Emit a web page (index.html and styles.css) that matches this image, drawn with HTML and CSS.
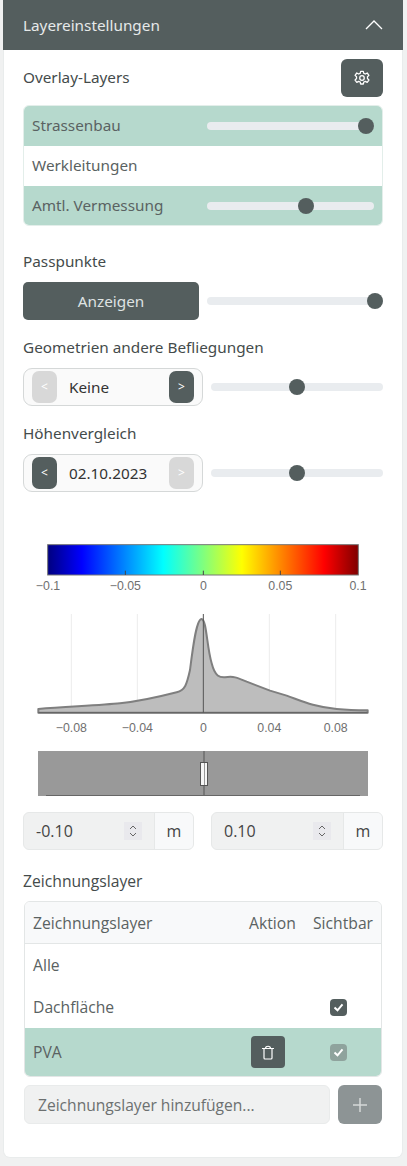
FILE: index.html
```html
<!DOCTYPE html>
<html lang="de">
<head>
<meta charset="utf-8">
<title>Layereinstellungen</title>
<link rel="stylesheet" href="styles.css">
</head>
<body>
<section class="card">
  <header class="card-head">
    <span>Layereinstellungen</span>
    <svg class="chev" width="18" height="10" viewBox="0 0 18 10"><path d="M1 9l8-8 8 8" fill="none" stroke="#fff" stroke-width="1.3"/></svg>
  </header>
  <div class="card-body">
    <div class="overlay-head">
      <span class="label lift">Overlay-Layers</span>
      <button class="gear-btn">
        <svg width="16" height="16" viewBox="0 0 24 24" fill="none" stroke="#fff" stroke-width="1.9" stroke-linejoin="round"><path d="M10 2h4l.7 3 2.4 1 2.7-1.5 2.6 3.5-2.2 2.2v2.6l2.2 2.2-2.6 3.5-2.7-1.5-2.4 1-.7 3h-4l-.7-3-2.4-1-2.7 1.5-2.6-3.5 2.2-2.2v-2.6L1.6 8l2.6-3.5L6.900 6l2.400-1z"/><circle cx="12" cy="12" r="3.400"/></svg>
      </button>
    </div>
    <div class="layer-list">
      <div class="layer-row on"><span class="lift">Strassenbau</span><div class="slider in-row"><i class="thumb" style="left:calc(100% - 8px)"></i></div></div>
      <div class="layer-row"><span class="lift">Werkleitungen</span></div>
      <div class="layer-row on"><span class="lift">Amtl. Vermessung</span><div class="slider in-row"><i class="thumb" style="left:59.5%"></i></div></div>
    </div>

    <div class="label pass-label">Passpunkte</div>
    <div class="ctrl-row">
      <button class="show-btn">Anzeigen</button>
      <div class="slider wide"><i class="thumb" style="left:calc(100% - 8px)"></i></div>
    </div>

    <div class="label next-label">Geometrien andere Befliegungen</div>
    <div class="ctrl-row">
      <div class="stepper">
        <button class="step off">&lt;</button><span class="step-val">Keine</span><button class="step">&gt;</button>
      </div>
      <div class="slider"><i class="thumb" style="left:50%"></i></div>
    </div>

    <div class="label next-label">Höhenvergleich</div>
    <div class="ctrl-row">
      <div class="stepper">
        <button class="step">&lt;</button><span class="step-val">02.10.2023</span><button class="step off">&gt;</button>
      </div>
      <div class="slider"><i class="thumb" style="left:50%"></i></div>
    </div>

    <svg class="plot" width="367" height="210" viewBox="0 0 1101 630">
      <defs>
        <linearGradient id="jet">
          <stop offset="0" stop-color="#00007f"/><stop offset=".11" stop-color="#0000ff"/>
          <stop offset=".372" stop-color="#00ffff"/><stop offset=".5" stop-color="#7fff7f"/>
          <stop offset=".625" stop-color="#ffff00"/><stop offset=".89" stop-color="#ff0000"/>
          <stop offset="1" stop-color="#7f0000"/>
        </linearGradient>
      </defs>
      <rect x="83" y="44" width="932" height="91" fill="url(#jet)" stroke="#777" stroke-width="3"/>
      <path d="M316 122v13M550 122v13M781 122v13" stroke="#444" stroke-width="3"/>
      <g class="tick">
        <text x="84" y="180">−0.1</text><text x="316" y="180">−0.05</text><text x="550" y="180">0</text><text x="781" y="180">0.05</text><text x="1014" y="180">0.1</text>
      </g>
      <path d="M154 252V548M352 252V548M748 252V548M947 252V548" stroke="#ececec" stroke-width="3"/>
      <path d="M55 537C150 530 250 525 300 520S400 505 470 487C495 480 500 465 510 420C520 340 530 267 545 267C560 270 560 350 575 400C585 440 600 443 615 442C640 438 650 442 680 455L750 482L800 497C850 515 880 530 950 537C990 541 1010 541 1043 541V548H55Z" fill="#bdbdbd" stroke="#7f7f7f" stroke-width="6" stroke-linejoin="round"/>
      <path d="M55 548H1043" stroke="#666" stroke-width="4"/>
      <path d="M550 252V548" stroke="#555" stroke-width="3"/>
      <g class="tick">
        <text x="154" y="606">−0.08</text><text x="352" y="606">−0.04</text><text x="550" y="606">0</text><text x="748" y="606">0.04</text><text x="947" y="606">0.08</text>
      </g>
    </svg>

    <div class="range">
      <i class="range-line"></i><i class="range-base"></i><i class="range-handle"></i>
    </div>

    <div class="limits">
      <div class="limit">
        <span class="limit-val">-0.10</span>
        <span class="spin"><svg width="10" height="16" viewBox="0 0 10 16" fill="none" stroke="#666" stroke-width="1"><path d="M2 6l3-3 3 3M2 10l3 3 3-3"/></svg></span>
        <span class="unit">m</span>
      </div>
      <div class="limit">
        <span class="limit-val">0.10</span>
        <span class="spin"><svg width="10" height="16" viewBox="0 0 10 16" fill="none" stroke="#666" stroke-width="1"><path d="M2 6l3-3 3 3M2 10l3 3 3-3"/></svg></span>
        <span class="unit">m</span>
      </div>
    </div>

    <div class="label draw-label">Zeichnungslayer</div>
    <div class="draw-table">
      <div class="tr th"><span class="c-name">Zeichnungslayer</span><span class="c-act">Aktion</span><span class="c-vis">Sichtbar</span></div>
      <div class="tr"><span class="c-name">Alle</span></div>
      <div class="tr"><span class="c-name">Dachfläche</span><span class="c-act"></span><span class="c-vis"><i class="check"><svg width="11" height="9" viewBox="0 0 11 9"><path d="M1.500 4.500l3 2.800 5-6" fill="none" stroke="#fff" stroke-width="2"/></svg></i></span></div>
      <div class="tr sel"><span class="c-name">PVA</span><span class="c-act"><button class="trash"><svg width="14" height="15" viewBox="0 0 14 15" fill="none" stroke="#fff" stroke-width="1.200"><path d="M1 3.500h12M3 3.500V13a1 1 0 0 0 1 1h6a1 1 0 0 0 1-1V3.500M4.500 3.500c0-3 5-3 5 0"/></svg></button></span><span class="c-vis"><i class="check dim"><svg width="11" height="9" viewBox="0 0 11 9"><path d="M1.500 4.500l3 2.800 5-6" fill="none" stroke="#fff" stroke-width="2"/></svg></i></span></div>
    </div>
    <div class="add-row">
      <div class="add-input">Zeichnungslayer hinzufügen...</div>
      <button class="add-btn"><svg width="16" height="16" viewBox="0 0 16 16"><path d="M8 1v14M1 8h14" stroke="#d5d8d8" stroke-width="1.500"/></svg></button>
    </div>
  </div>
</section>
</body>
</html>
```
FILE: styles.css
```css
* { box-sizing: border-box; }
html, body { margin: 0; height: 1166px; overflow: hidden; }
body {
  background: #f0f1f1;
  padding: 0 4px 0 3px;
  font: 15.3px/20px "Noto Sans", sans-serif;
  color: #4a5050;
}
button { border: 0; padding: 0; font: inherit; color: #fff; display: flex; align-items: center; justify-content: center; }
.card {
  height: 1158px;
  background: #fff;
  border-radius: 0 0 7px 7px;
  border: 1px solid #e9ecec;
  border-top: 0;
}
.card-head {
  height: 50px;
  margin: 0 -1px;
  background: #545e5e;
  color: #e6e9e9;
  padding: 0 21px 0 20px;
  display: flex;
  align-items: center;
  justify-content: space-between;
}
.chev { margin-right: -1px; }
.card-body { padding: 9px 19px 0; }
.label { color: #444b4b; }
.lift { margin-bottom: 3px; }
.overlay-head { height: 38px; display: flex; align-items: center; justify-content: space-between; }
.gear-btn { width: 42px; height: 38px; background: #545e5e; border-radius: 6px; }
.layer-list {
  margin-top: 8px;
  height: 121px;
  border: 1px solid #e3eeea;
  border-radius: 6px;
  overflow: hidden;
}
.layer-row {
  height: 40px;
  padding: 0 8px;
  display: flex;
  align-items: center;
  justify-content: space-between;
  color: #5a6262;
}
.layer-row.on { background: #b6d9cd; }
.slider {
  flex: 1;
  height: 8px;
  border-radius: 4px;
  background: #e9ecef;
  position: relative;
}
.slider.in-row { flex: none; width: 167px; }
.thumb {
  position: absolute;
  top: -4px;
  width: 16px;
  height: 16px;
  margin-left: -8px;
  border-radius: 50%;
  background: #545e5e;
}
.pass-label { margin-top: 25px; }
.ctrl-row { margin-top: 11px; display: flex; align-items: center; gap: 8px; height: 38px; }
.show-btn { width: 176px; height: 38px; background: #545e5e; border-radius: 5px; color: #dfe3e3; }
.next-label { margin-top: 17px; }
.stepper {
  width: 180px;
  height: 38px;
  border: 1px solid #d5d8d8;
  border-radius: 9px;
  background: #fafafa;
  padding: 0 8px;
  display: flex;
  align-items: center;
  color: #333;
}
.step { width: 25px; height: 32px; border-radius: 7px; background: #545e5e; font-size: 12px; }
.step.off { background: #d8d8d8; }
.step-val { flex: 1; padding-left: 12px; }
.plot { display: block; margin: 38px 0 0 -3px; }
.tick text { font: 37px "Liberation Sans", sans-serif; fill: #707070; text-anchor: middle; }
.range {
  position: relative;
  margin: 11px 0 0 15px;
  width: 330px;
  height: 45px;
  background: #999;
}
.range-line { position: absolute; left: 165px; top: 0; width: 2px; height: 100%; background: #777; }
.range-base { position: absolute; left: 8px; right: 8px; bottom: 0; height: 1px; background: #666; }
.range-handle {
  position: absolute;
  left: 162px;
  top: 11px;
  width: 8px;
  height: 24px;
  background: linear-gradient(90deg, #f7f7f7 0 3px, #999 3px 4px, #f7f7f7 4px);
  border: 1px solid #555;
}
.limits { margin-top: 16px; display: flex; gap: 17px; }
.limit {
  flex: 1;
  height: 38px;
  border: 1px solid #e6e8e8;
  border-radius: 6px;
  overflow: hidden;
  display: flex;
  align-items: center;
  background: #f0f1f1;
  font: 16px "Open Sans", sans-serif;
}
.limit:first-child { flex: 0 0 171px; }
.limit-val { flex: 1; padding-left: 12px; color: #444; }
.spin {
  width: 18px;
  height: 18px;
  margin-right: 12px;
  background: #e9e9ed;
  display: flex;
  align-items: center;
  justify-content: center;
}
.unit { width: 39px; height: 100%; background: #f8f9fa; border-left: 1px solid #e6e8e8; display: flex; align-items: center; justify-content: center; color: #444; }
.draw-label { margin-top: 21px; font-family: "Open Sans", sans-serif; font-size: 15.7px; }
.draw-table {
  margin: 10px 1px 0;
  width: 358px;
  height: 176px;
  border: 1px solid #e3e6e6;
  border-radius: 6px;
  overflow: hidden;
  font: 15.7px "Open Sans", sans-serif;
}
.tr { height: 42px; padding: 0 8px; display: flex; align-items: center; color: #5a6262; }
.tr.th { height: 42px; background: #f8f9fa; border-bottom: 1px solid #e3e6e6; }
.tr.sel { height: 48px; background: #b6d9cd; }
.c-name { flex: 1; }
.c-act { width: 64px; }
.c-vis { width: 60px; white-space: nowrap; }
.check {
  display: flex;
  align-items: center;
  justify-content: center;
  width: 17px;
  height: 17px;
  margin-left: 17px;
  border-radius: 4px;
  background: #545e5e;
}
.check.dim { background: #8fa39d; }
.trash { width: 34px; height: 32px; margin-left: 2px; border-radius: 4px; background: #545e5e; }
.add-row { margin: 8px 1px 0; display: flex; gap: 8px; width: 358px; }
.add-input {
  flex: 1;
  height: 39px;
  padding-left: 13px;
  display: flex;
  align-items: center;
  border: 1px solid #e9ebeb;
  border-radius: 6px;
  background: #f0f1f1;
  color: #6c7070;
  font: 15.6px "Open Sans", sans-serif;
}
.add-btn { width: 44px; height: 39px; border-radius: 6px; background: #8d9495; }
```
